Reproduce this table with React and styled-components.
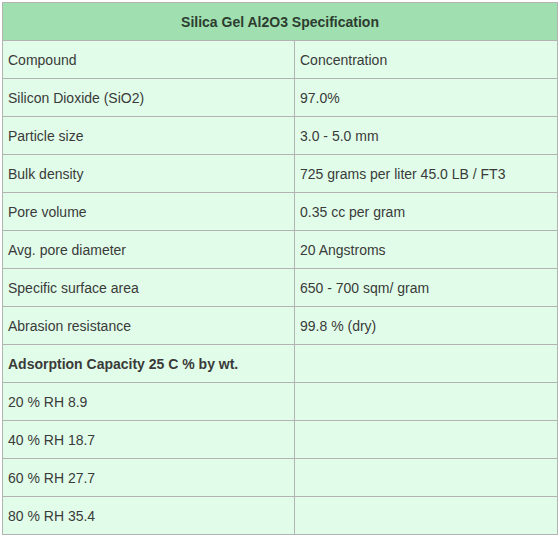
import React from 'react';
import styled, { createGlobalStyle } from 'styled-components';

const GlobalStyle = createGlobalStyle`
  body {
    margin: 0;
    background: #ffffff;
    font-family: "Liberation Sans", Arial, sans-serif;
  }
`;

const Wrapper = styled.div`
  padding: 2px;
`;

const SpecTable = styled.table`
  width: 556px;
  border-collapse: collapse;
  border: 1px solid #b3b3b3;
  font-size: 14px;
  color: #3a3a3a;
  background: #e1fde9;
`;

const HeadCell = styled.th`
  height: 37px;
  padding: 0 5px;
  background: #9fdfb0;
  color: #2c3d2f;
  font-weight: bold;
  text-align: center;
  border: 1px solid #b3b3b3;
`;

const Cell = styled.td`
  height: 37px;
  padding: 0 5px;
  width: ${(p) => (p.$first ? '281px' : 'auto')};
  font-weight: ${(p) => (p.$bold ? 'bold' : 'normal')};
  border: 1px solid #b3b3b3;
  vertical-align: middle;
`;

const rows = [
  ['Compound', 'Concentration'],
  ['Silicon Dioxide (SiO2)', '97.0%'],
  ['Particle size', '3.0 - 5.0 mm'],
  ['Bulk density', '725 grams per liter 45.0 LB / FT3'],
  ['Pore volume', '0.35 cc per gram'],
  ['Avg. pore diameter', '20 Angstroms'],
  ['Specific surface area', '650 - 700 sqm/ gram'],
  ['Abrasion resistance', '99.8 % (dry)'],
  ['Adsorption Capacity 25 C % by wt.', '', true],
  ['20 % RH 8.9', ''],
  ['40 % RH 18.7', ''],
  ['60 % RH 27.7', ''],
  ['80 % RH 35.4', ''],
];

export default function App() {
  return (
    <>
      <GlobalStyle />
      <Wrapper>
        <SpecTable>
          <thead>
            <tr>
              <HeadCell colSpan={2}>Silica Gel Al2O3 Specification</HeadCell>
            </tr>
          </thead>
          <tbody>
            {rows.map(([a, b, bold]) => (
              <tr key={a}>
                <Cell $first $bold={bold}>{a}</Cell>
                <Cell>{b}</Cell>
              </tr>
            ))}
          </tbody>
        </SpecTable>
      </Wrapper>
    </>
  );
}
